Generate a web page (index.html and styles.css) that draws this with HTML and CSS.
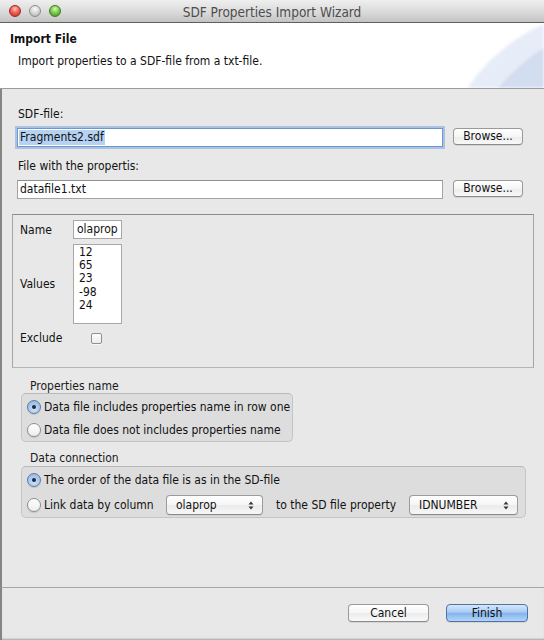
FILE: index.html
```html
<!DOCTYPE html>
<html>
<head>
<meta charset="utf-8">
<link rel="stylesheet" href="styles.css">
</head>
<body>
<div class="window">
  <div class="titlebar">
    <div class="lights">
      <span class="light red"></span>
      <span class="light gray"></span>
      <span class="light green"></span>
    </div>
    <div class="title">SDF Properties Import Wizard</div>
    <div></div>
  </div>
  <div class="header">
    <svg class="swoosh" width="544" height="65" viewBox="0 0 544 65">
      <circle cx="618" cy="167" r="182" fill="#e7edf8"/>
      <circle cx="638" cy="177" r="179" fill="#d3ddf0"/>
    </svg>
    <div class="h-title">Import File</div>
    <div class="h-desc">Import properties to a SDF-file from a txt-file.</div>
  </div>
  <div class="main">
    <div class="label">SDF-file:</div>
    <div class="file-row">
      <div class="field focused"><span class="sel">Fragments2.sdf</span></div>
      <div class="btn browse">Browse...</div>
    </div>
    <div class="label second">File with the propertis:</div>
    <div class="file-row">
      <div class="field">datafile1.txt</div>
      <div class="btn browse">Browse...</div>
    </div>
    <div class="panel">
      <div class="p-label">Name</div>
      <div class="name-input">olaprop</div>
      <div class="p-label">Values</div>
      <div class="values">
        <div>12</div><div>65</div><div>23</div><div>-98</div><div>24</div>
      </div>
      <div class="p-label">Exclude</div>
      <div class="check-cell"><span class="checkbox"></span></div>
    </div>
    <div class="group-label">Properties name</div>
    <div class="group g1">
      <div class="radio-row"><span class="radio on"></span><span class="r-text">Data file includes properties name in row one</span></div>
      <div class="radio-row"><span class="radio"></span><span class="r-text">Data file does not includes properties name</span></div>
    </div>
    <div class="group-label gl2">Data connection</div>
    <div class="group g2">
      <div class="radio-row tall"><span class="radio on"></span><span class="r-text">The order of the data file is as in the SD-file</span></div>
      <div class="radio-row tall2">
        <span class="radio"></span><span class="r-text link-text">Link data by column</span>
        <div class="combo c1"><span>olaprop</span><svg width="6" height="9" viewBox="0 0 6 9"><path d="M3 0.5 L5.5 3.5 L0.5 3.5 Z M3 8.5 L5.5 5.5 L0.5 5.5 Z" fill="#333"/></svg></div>
        <span class="r-text to-text">to the SD file property</span>
        <div class="combo c2"><span>IDNUMBER</span><svg width="6" height="9" viewBox="0 0 6 9"><path d="M3 0.5 L5.5 3.5 L0.5 3.5 Z M3 8.5 L5.5 5.5 L0.5 5.5 Z" fill="#333"/></svg></div>
      </div>
    </div>
  </div>
  <div class="footer">
    <div class="btn cancel">Cancel</div>
    <div class="btn finish">Finish</div>
  </div>
</div>
</body>
</html>
```
FILE: styles.css
```css
html, body {
  margin: 0;
  padding: 0;
}
body {
  width: 544px;
  height: 640px;
  overflow: hidden;
  background: #e8e8e8;
  font-family: "DejaVu Sans Condensed", "DejaVu Sans", sans-serif;
  font-stretch: semi-condensed;
  font-size: 12px;
  color: #111;
}
.window {
  height: 640px;
  display: flex;
  flex-direction: column;
}
.titlebar {
  height: 22px;
  border-bottom: 1px solid #5f5f5f;
  background: linear-gradient(#efefef, #dadada 55%, #c3c3c3);
  display: grid;
  grid-template-columns: 1fr auto 1fr;
  align-items: center;
}
.lights {
  display: flex;
  gap: 8px;
  padding-left: 9px;
}
.light {
  width: 12px;
  height: 12px;
  border-radius: 50%;
  box-sizing: border-box;
}
.light.red {
  background: radial-gradient(circle at 50% 30%, #ffc6bd 0, #f06156 45%, #c0281f 100%);
  border: 1px solid #9c2a22;
}
.light.gray {
  background: radial-gradient(circle at 50% 30%, #fafafa 0, #d6d6d6 50%, #a9a9a9 100%);
  border: 1px solid #8c8c8c;
}
.light.green {
  background: radial-gradient(circle at 50% 30%, #dcf7b8 0, #7ccc4c 45%, #3f8f22 100%);
  border: 1px solid #3d7b24;
}
.title {
  font-size: 13.5px;
  color: #4d4d4d;
  line-height: 16px;
  padding-top: 1px;
}
.header {
  position: relative;
  height: 57px;
  padding: 8px 10px 0 10px;
  border-bottom: 1px solid #9c9c9c;
  background: #ffffff;
  overflow: hidden;
}
.swoosh {
  position: absolute;
  left: 0;
  top: 0;
  display: block;
  filter: blur(1.5px);
}
.h-title {
  position: relative;
  font-weight: bold;
  line-height: 16px;
}
.h-desc {
  position: relative;
  margin-top: 6px;
  margin-left: 8px;
  line-height: 16px;
}
.main {
  flex: 1;
  border-left: 2px solid #858585;
  padding: 17px 10px 0 10px;
}
.label {
  line-height: 16px;
  margin-left: 6px;
}
.label.second {
  margin-top: 11px;
}
.file-row {
  display: flex;
  align-items: flex-start;
  margin-left: 5px;
  margin-top: 6px;
  gap: 10px;
}
.field {
  width: 426px;
  height: 19px;
  box-sizing: border-box;
  border: 1px solid #a3a3a3;
  border-top-color: #8f8f8f;
  background: #fff;
  padding: 0 2px;
  line-height: 17px;
  white-space: nowrap;
}
.field.focused {
  border-color: #6b98d2;
  box-shadow: 0 0 0 2px rgba(122, 163, 218, 0.55);
  padding: 1px 1px;
  line-height: 15px;
}
.sel {
  display: inline-block;
  background: #b6d2f3;
  padding: 0 1px;
}
.btn {
  box-sizing: border-box;
  border: 1px solid #9a9a9a;
  border-bottom-color: #8a8a8a;
  border-radius: 4px;
  background: linear-gradient(#ffffff, #f6f6f6 50%, #ececec 51%, #f8f8f8);
  text-align: center;
  color: #111;
  box-shadow: 0 1px 0 rgba(0,0,0,0.08);
}
.browse {
  width: 70px;
  height: 17px;
  line-height: 15px;
}
.panel {
  margin-top: 15px;
  height: 154px;
  box-sizing: border-box;
  border: 1px solid #a5a5a5;
  border-top-color: #8c8c8c;
  border-bottom-color: #b5b5b5;
  padding: 5px 7px;
  display: grid;
  grid-template-columns: 53px auto;
  grid-auto-rows: auto;
  row-gap: 5px;
  align-items: center;
  align-content: start;
  justify-items: start;
}
.p-label {
  line-height: 16px;
}
.name-input {
  width: 49px;
  height: 19px;
  box-sizing: border-box;
  border: 1px solid #a8a8a8;
  background: #fff;
  padding-left: 3px;
  line-height: 17px;
  overflow: hidden;
  white-space: nowrap;
}
.values {
  width: 49px;
  height: 80px;
  box-sizing: border-box;
  border: 1px solid #a8a8a8;
  background: #fff;
  padding: 1px 0 0 5px;
  line-height: 13.2px;
}
.check-cell {
  height: 18px;
  display: flex;
  align-items: center;
}
.checkbox {
  display: block;
  margin-left: 18px;
  width: 11px;
  height: 11px;
  box-sizing: border-box;
  border: 1px solid #8f8f8f;
  border-radius: 2px;
  background: linear-gradient(#fdfdfd, #ececec);
  box-shadow: 0 1px 0 rgba(255,255,255,0.6);
}
.group-label {
  margin-top: 11px;
  margin-left: 18px;
  line-height: 14px;
  color: #1a1a1a;
}
.group-label.gl2 {
  margin-top: 9px;
}
.group {
  margin-left: 9px;
  box-sizing: border-box;
  border: 1px solid #c4c4c4;
  border-top-color: #b8b8b8;
  border-radius: 5px;
  background: #dddddd;
  padding: 1px 0 1px 5px;
}
.g1 {
  width: 272px;
  height: 49px;
}
.g2 {
  margin-top: 1px;
  width: 505px;
  height: 52px;
  padding-top: 0;
}
.radio-row {
  height: 23px;
  display: flex;
  align-items: center;
}
.radio-row.tall {
  height: 26px;
}
.radio-row.tall2 {
  height: 24px;
}
.radio {
  display: block;
  width: 14px;
  height: 14px;
  box-sizing: border-box;
  border-radius: 50%;
  border: 1px solid #8d8d8d;
  background: linear-gradient(#ffffff, #ededed);
  box-shadow: 0 1px 1px rgba(0,0,0,0.12);
  position: relative;
  flex: none;
}
.radio.on {
  border-color: #5f7ba3;
  background: radial-gradient(circle at 50% 70%, #cde0f8 0, #a9c6ec 55%, #8aaedc 100%);
}
.radio.on::after {
  content: "";
  position: absolute;
  left: 4px;
  top: 4px;
  width: 4px;
  height: 4px;
  border-radius: 50%;
  background: #1d2a3c;
}
.r-text {
  margin-left: 3px;
  line-height: 16px;
  white-space: nowrap;
}
.link-text {
  width: 122px;
}
.combo {
  height: 20px;
  box-sizing: border-box;
  border: 1px solid #9b9b9b;
  border-bottom-color: #8a8a8a;
  border-radius: 4px;
  background: linear-gradient(#ffffff, #f5f5f5 50%, #ebebeb 51%, #f7f7f7);
  display: flex;
  align-items: center;
  justify-content: space-between;
  padding: 0 8px 0 9px;
  box-shadow: 0 1px 0 rgba(0,0,0,0.06);
}
.combo.c1 {
  width: 97px;
}
.to-text {
  margin-left: 13px;
  width: 133px;
}
.combo.c2 {
  width: 109px;
}
.footer {
  height: 53px;
  border-left: 2px solid #858585;
  border-top: 1px solid #a6a6a6;
  display: flex;
  justify-content: flex-end;
  align-items: flex-start;
  gap: 17px;
  padding: 16px 16px 0 0;
  box-sizing: border-box;
  box-shadow: inset 0 -2px 2px -1px rgba(0,0,0,0.3);
}
.cancel, .finish {
  height: 18px;
  line-height: 16px;
}
.cancel {
  width: 81px;
}
.finish {
  width: 82px;
  border-color: #4f73a6;
  background: linear-gradient(#d6e7fb, #a8cbf3 45%, #82b3ec 52%, #b4d5f8);
}
```
